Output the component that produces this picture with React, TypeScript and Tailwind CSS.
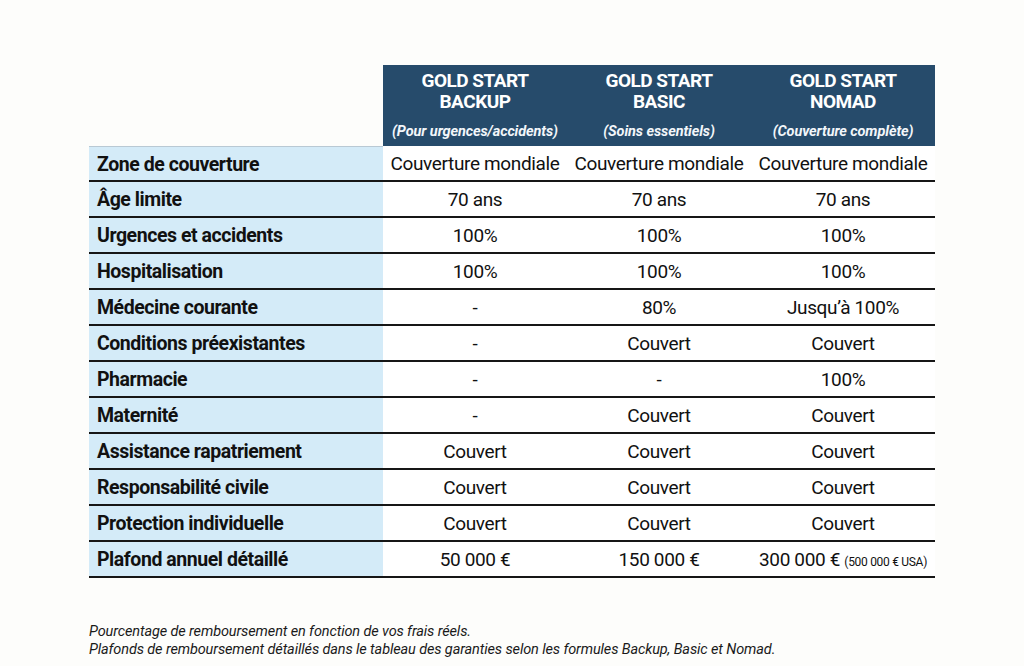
import React from "react";

const rows: [string, string, string, React.ReactNode][] = [
  ["Zone de couverture", "Couverture mondiale", "Couverture mondiale", "Couverture mondiale"],
  ["Âge limite", "70 ans", "70 ans", "70 ans"],
  ["Urgences et accidents", "100%", "100%", "100%"],
  ["Hospitalisation", "100%", "100%", "100%"],
  ["Médecine courante", "-", "80%", "Jusqu’à 100%"],
  ["Conditions préexistantes", "-", "Couvert", "Couvert"],
  ["Pharmacie", "-", "-", "100%"],
  ["Maternité", "-", "Couvert", "Couvert"],
  ["Assistance rapatriement", "Couvert", "Couvert", "Couvert"],
  ["Responsabilité civile", "Couvert", "Couvert", "Couvert"],
  ["Protection individuelle", "Couvert", "Couvert", "Couvert"],
  [
    "Plafond annuel détaillé",
    "50 000 €",
    "150 000 €",
    <span key="p">
      300 000 € <span className="text-[12px] tracking-[-0.3px]">(500 000 € USA)</span>
    </span>,
  ],
];

const headers = [
  ["GOLD START", "BACKUP", "(Pour urgences/accidents)"],
  ["GOLD START", "BASIC", "(Soins essentiels)"],
  ["GOLD START", "NOMAD", "(Couverture complète)"],
];

const font = { fontFamily: 'Roboto, "Liberation Sans", sans-serif' };

export default function App() {
  return (
    <div className="w-[1024px] h-[666px] bg-[#fdfdfb] text-[#111] overflow-hidden" style={font}>
      <div className="pt-[65px] pl-[89px]">
        <div className="grid grid-cols-[294px_184px_184px_184px] w-[846px]">
          <div />
          {headers.map((h, i) => (
            <div key={i} className="bg-[#264b6b] h-[81px] flex flex-col items-center text-white pt-[5px]">
              <div className="text-[19px] font-bold leading-[21px] tracking-[-0.5px]">{h[0]}</div>
              <div className="text-[19px] font-bold leading-[21px] tracking-[-0.5px]">{h[1]}</div>
              <div className="text-[14.5px] font-bold italic leading-[18px] mt-[11px] tracking-[-0.1px] text-[#f2f6fa]">{h[2]}</div>
            </div>
          ))}
          {rows.map((r, i) => (
            <React.Fragment key={i}>
              <div
                className={`h-[36px] bg-[#d4ebf8] border-b-2 border-[#161616] flex items-center pl-[8px] pt-[2px] text-[19.5px] font-bold tracking-[-0.45px] ${
                  i === 0 ? "border-t border-t-[#b9c9d4]" : ""
                }`}
              >
                {r[0]}
              </div>
              {[r[1], r[2], r[3]].map((c, j) => (
                <div
                  key={j}
                  className={`h-[36px] bg-white border-b-2 border-[#161616] flex items-center justify-center pt-[2px] text-[19px] tracking-[-0.35px] whitespace-nowrap ${
                    i === 0 ? "border-t border-t-white" : ""
                  }`}
                >
                  {c}
                </div>
              ))}
            </React.Fragment>
          ))}
        </div>
        <div className="mt-[45px] text-[14.5px] italic leading-[18px] tracking-[-0.12px] text-[#1a1a1a]">
          <div>Pourcentage de remboursement en fonction de vos frais réels.</div>
          <div>Plafonds de remboursement détaillés dans le tableau des garanties selon les formules Backup, Basic et Nomad.</div>
        </div>
      </div>
    </div>
  );
}
